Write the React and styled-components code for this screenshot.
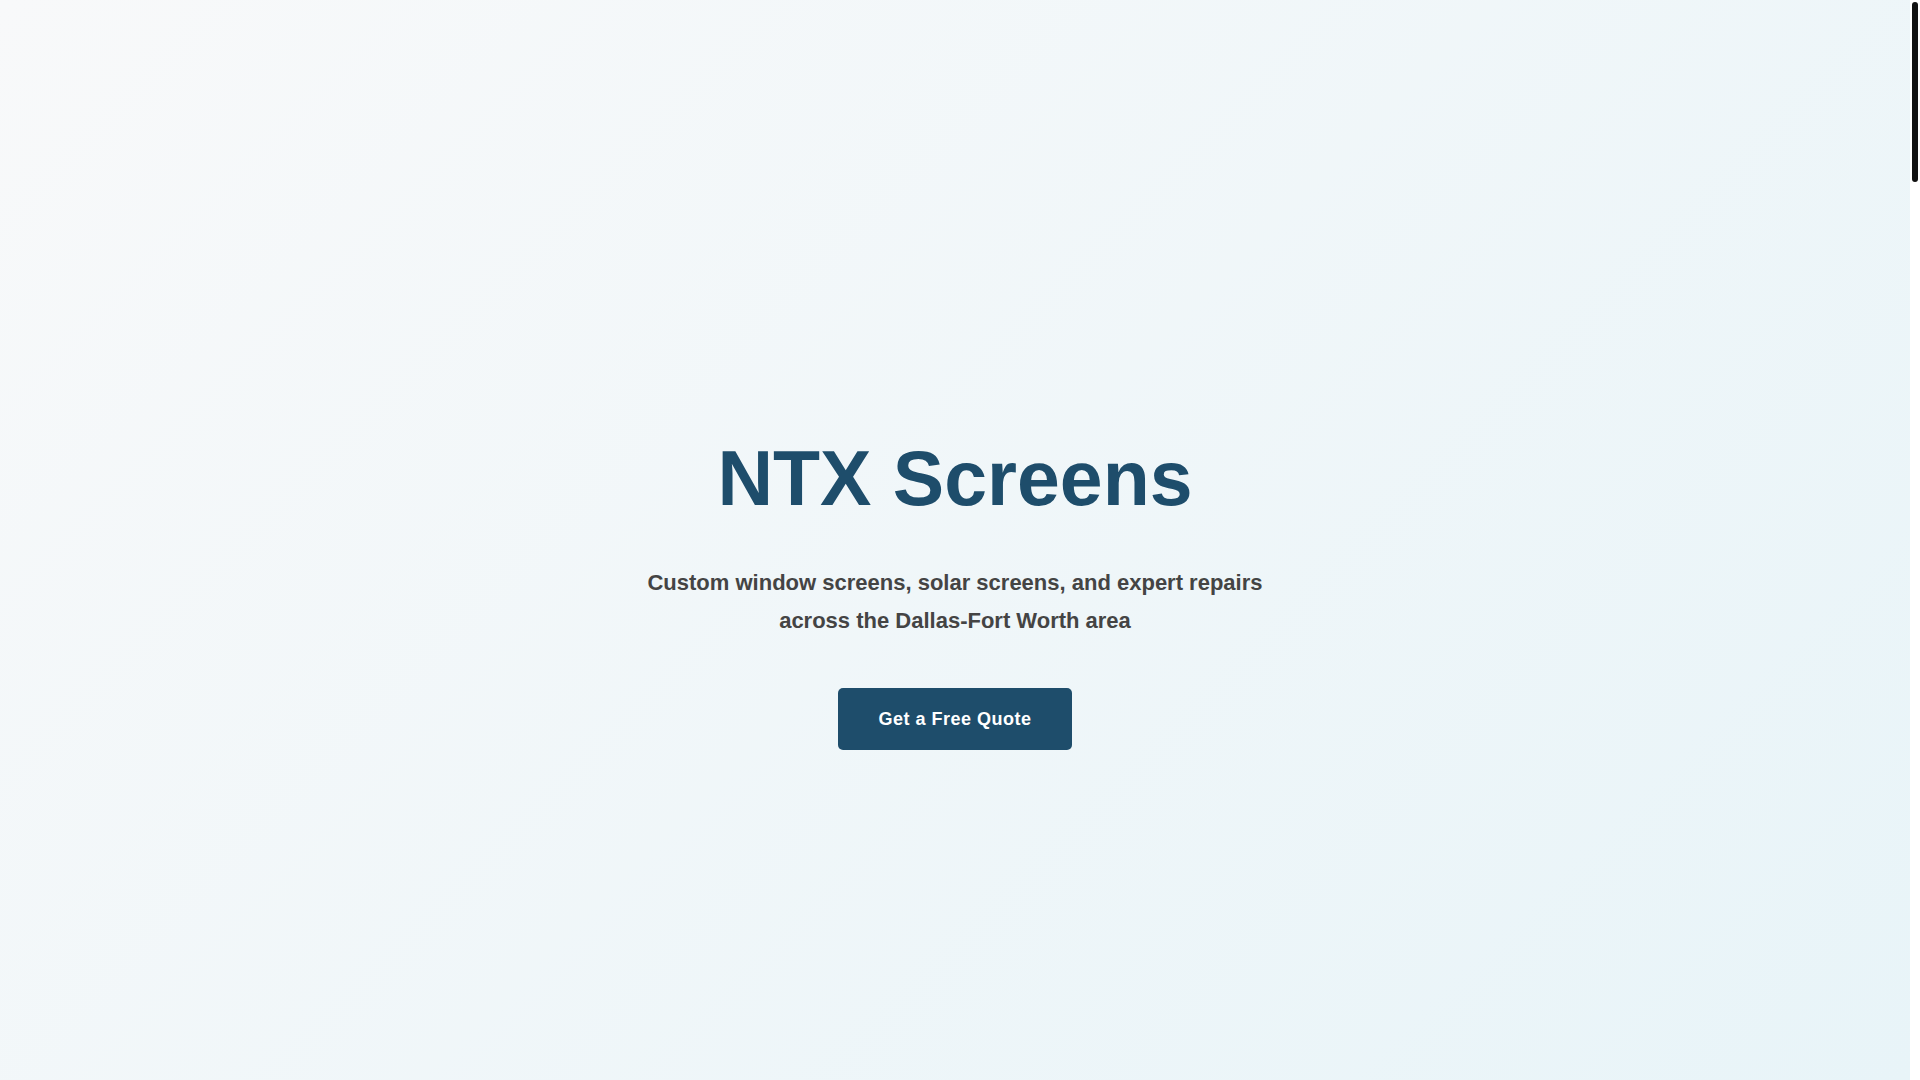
import React from "react";
import styled, { createGlobalStyle } from "styled-components";

const GlobalStyle = createGlobalStyle`
  html, body {
    margin: 0;
    padding: 0;
    height: 100%;
    overflow: hidden;
    background: #ffffff;
    font-family: "Liberation Sans", Arial, Helvetica, sans-serif;
  }
  *, *::before, *::after {
    box-sizing: border-box;
  }
`;

const Frame = styled.div`
  display: flex;
  height: 100vh;
`;

// the page scrolls in here; the rail beside it shows where we are
const Viewport = styled.div`
  flex: 1;
  min-width: 0;
  overflow-y: auto;
  scrollbar-width: none;

  &::-webkit-scrollbar {
    display: none;
  }
`;

const Rail = styled.div`
  flex: 0 0 10px;
  padding: 2px;
  background: #ffffff;
`;

const Thumb = styled.div`
  width: 6px;
  border-radius: 3px;
  background: #111111;
`;

const Hero = styled.section`
  min-height: 100vh;
  display: flex;
  flex-direction: column;
  align-items: center;
  justify-content: center;
  padding: 104px 20px 0;
  text-align: center;
  background: linear-gradient(135deg, #f8f9fa 0%, #e8f4f8 100%);
`;

const Title = styled.h1`
  margin: 0 0 41px;
  font-size: 77px;
  font-weight: 700;
  line-height: 1.15;
  color: #1e4d6b;
`;

const Tagline = styled.p`
  margin: 0 0 48px;
  max-width: 640px;
  font-size: 22px;
  font-weight: 700;
  line-height: 1.72;
  color: #444444;
`;

const QuoteButton = styled.a`
  display: inline-block;
  padding: 20px 40px;
  font-size: 18px;
  font-weight: 700;
  line-height: 22px;
  letter-spacing: 0.5px;
  color: #ffffff;
  background: #1e4d6b;
  border-radius: 5px;
  text-decoration: none;
  cursor: pointer;

  &:hover {
    background: #163a52;
  }
`;

// the rest of the site sits below the fold
const RestOfPage = styled.main`
  background: #ffffff;
`;

const PAGE_HEIGHT = 6480;

export default function App() {
  const [thumb, setThumb] = React.useState({ top: 0, height: 180 });

  const onScroll = (e) => {
    const el = e.currentTarget;
    const track = el.clientHeight - 4;
    const height = Math.max(30, (el.clientHeight / el.scrollHeight) * track);
    const top = (el.scrollTop / (el.scrollHeight - el.clientHeight)) * (track - height);
    setThumb({ top, height });
  };

  return (
    <>
      <GlobalStyle />
      <Frame>
        <Viewport onScroll={onScroll}>
          <Hero>
            <Title>NTX Screens</Title>
            <Tagline>
              Custom window screens, solar screens, and expert repairs across
              the Dallas-Fort Worth area
            </Tagline>
            <QuoteButton href="#contact">Get a Free Quote</QuoteButton>
          </Hero>
          <RestOfPage id="contact" style={{ minHeight: PAGE_HEIGHT - 1080 }} />
        </Viewport>
        <Rail>
          <Thumb style={{ height: thumb.height, marginTop: thumb.top }} />
        </Rail>
      </Frame>
    </>
  );
}
